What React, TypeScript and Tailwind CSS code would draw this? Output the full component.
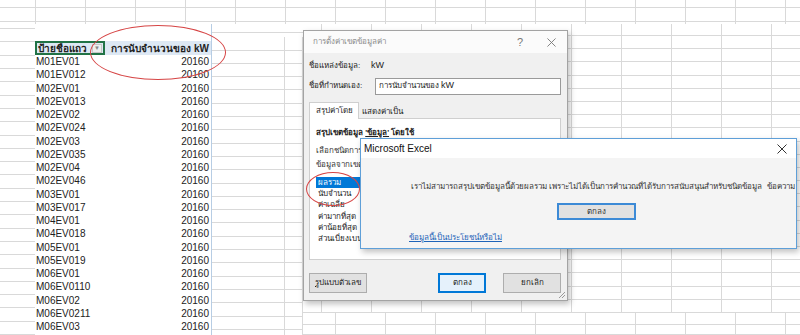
import React from 'react';

const rows = [
  'M01EV01', 'M01EV012', 'M02EV01', 'M02EV013', 'M02EV02', 'M02EV024', 'M02EV03',
  'M02EV035', 'M02EV04', 'M02EV046', 'M03EV01', 'M03EV017', 'M04EV01', 'M04EV018',
  'M05EV01', 'M05EV019', 'M06EV01', 'M06EV0110', 'M06EV02', 'M06EV0211', 'M06EV03',
];

// the list runs on under the message box; only the visible part is kept
const summaryTypes = ['ผลรวม', 'นับจำนวน', 'ค่าเฉลี่ย', 'ค่ามากที่สุด', 'ค่าน้อยที่สุด', 'ส่วนเบี่ยงเบน'];

const cells = (n: number) => Array.from({ length: n }, (_, i) => i);

const CloseIcon = ({ size = 10, color = '#555' }: { size?: number; color?: string }) => (
  <svg width={size} height={size} viewBox="0 0 10 10">
    <path d="M0.5 0.5 L9.5 9.5 M9.5 0.5 L0.5 9.5" stroke={color} strokeWidth="1" />
  </svg>
);

const ValueFieldDialog: React.FC = () => (
  <div className="absolute left-[303px] top-[30px] w-[265px] h-[271px] flex flex-col bg-[#f0f0f0] border border-[#a3a3a3] shadow-[2px_3px_6px_rgba(0,0,0,0.25)]">
    <div className="h-[22px] flex items-center bg-[#fbfbfb] pl-[9px] text-[8px] text-[#8c8c8c]">
      <span className="flex-1">การตั้งค่าเขตข้อมูลค่า</span>
      <span className="w-[30px] text-center text-[11px] text-[#777]">?</span>
      <span className="w-[32px] flex justify-center"><CloseIcon size={9} color="#777" /></span>
    </div>
    <div className="flex-1 flex flex-col px-[5px] text-[8px] text-[#222]">
      <div className="h-[16px] mt-[5px] flex items-center">
        <span className="w-[62px]">ชื่อแหล่งข้อมูล:</span>
        <span className="text-[9px]">kW</span>
      </div>
      <div className="h-[18px] mt-[3px] flex items-center">
        <span className="w-[66px]">ชื่อที่กำหนดเอง:</span>
        <div className="flex-1 h-[17px] mr-[1px] flex items-center bg-white border border-[#9a9a9a] px-[3px]">การนับจำนวนของ <span className="ml-[2px] text-[9px]">kW</span></div>
      </div>
      <div className="mt-[7px] flex items-end h-[17px]">
        <div className="h-[17px] w-[50px] flex items-center justify-center bg-white border border-b-0 border-[#cfcfcf] relative z-10">สรุปค่าโดย</div>
        <div className="h-[15px] w-[47px] flex items-center justify-center bg-[#f0f0f0]">แสดงค่าเป็น</div>
      </div>
      <div className="h-[142px] shrink-0 -mt-[1px] mr-[1px] bg-white border border-[#cfcfcf] flex flex-col px-[6px] pt-[8px] leading-[12px]">
        <div className="h-[12px] shrink-0 font-bold">สรุปเขตข้อมูล <span className="underline">'ข้อมูล'</span> โดยใช้</div>
        <div className="h-[12px] shrink-0 mt-[6px] text-[#333]">เลือกชนิดการ</div>
        <div className="h-[12px] shrink-0 mt-[2px] text-[#333]">ข้อมูลจากเขต</div>
        <div className="mt-[6px] w-[46px] shrink-0 flex flex-col">
          {summaryTypes.map((t, i) => (
            <div key={t} className={`h-[11.2px] shrink-0 leading-[11px] px-[2px] whitespace-nowrap ${i === 0 ? 'bg-[#0078d7] text-white' : ''}`}>{t}</div>
          ))}
        </div>
      </div>
      <div className="mt-[13px] flex items-center h-[20px]">
        <div className="w-[58px] h-[20px] flex items-center justify-center bg-[#e1e1e1] border border-[#adadad]"><span><span className="underline">รู</span>ปแบบตัวเลข</span></div>
        <div className="flex-1" />
        <div className="w-[48px] h-[20px] flex items-center justify-center bg-[#e5f1fb] border-2 border-[#0078d7]">ตกลง</div>
        <div className="w-[58px] h-[20px] ml-[17px] mr-[1px] flex items-center justify-center bg-[#e1e1e1] border border-[#adadad]">ยกเลิก</div>
      </div>
    </div>
    <svg className="absolute right-[1px] bottom-[1px]" width="8" height="8" viewBox="0 0 8 8">
      <path d="M7 1 L1 7 M7 4 L4 7" stroke="#9a9a9a" strokeWidth="1" />
    </svg>
  </div>
);

const MessageBox: React.FC = () => (
  <div className="absolute left-[360px] top-[138px] w-[437px] h-[111px] flex flex-col bg-[#f4f4f4] border border-[#5e9fd8] shadow-[2px_3px_6px_rgba(0,0,0,0.25)]">
    <div className="h-[19px] flex items-center bg-white pl-[3px] text-[10px] text-[#111]">
      <span className="flex-1">Microsoft Excel</span>
      <span className="w-[28px] flex justify-center"><CloseIcon size={10} color="#333" /></span>
    </div>
    <div className="flex-1 flex flex-col items-center text-[8px] text-[#333]">
      <div className="mt-[23px] pl-[50px] w-full whitespace-nowrap">เราไม่สามารถสรุปเขตข้อมูลนี้ด้วยผลรวม เพราะไม่ได้เป็นการคำนวณที่ได้รับการสนับสนุนสำหรับชนิดข้อมูล&nbsp;&nbsp;ข้อความ</div>
      <div className="mt-[10px] w-[79px] h-[17px] ml-[36px] flex items-center justify-center bg-[#e1e1e1] border-2 border-[#3c8ad6]">ตกลง</div>
      <div className="mt-[12px] pl-[48px] w-full text-[#1e63b8] underline">ข้อมูลนี้เป็นประโยชน์หรือไม่</div>
    </div>
  </div>
);

const App: React.FC = () => {
  return (
    <div className="relative w-[800px] h-[335px] overflow-hidden bg-white font-['Liberation_Sans','DejaVu_Sans','Noto_Sans',sans-serif]">
      {/* top strip of sheet */}
      <div className="h-[24px] flex">
        <div className="w-[36px] shrink-0 border-r border-[#d9d9d9] flex flex-col">
          <div className="h-[8px] border-b border-[#d9d9d9]" />
          <div className="h-[14px] border-b border-[#d9d9d9]" />
        </div>
        {cells(16).map(i => (
          <div key={i} className="w-[50px] shrink-0 border-r border-[#d9d9d9] flex flex-col">
            <div className="h-[8px] border-b border-[#d9d9d9]" />
            <div className="h-[14px] border-b border-[#d9d9d9]" />
          </div>
        ))}
      </div>

      <div className="h-[311px] flex">
        {/* left gutter */}
        <div className="w-[35px] shrink-0 flex flex-col">
          <div className="h-[8px] border-b border-[#d9d9d9]" />
          {cells(23).map(i => <div key={i} className="h-[13.3px] shrink-0 border-b border-[#d9d9d9]" />)}
        </div>

        {/* pivot table */}
        <div className="w-[177px] shrink-0 flex flex-col border-r border-[#b7cde4] text-[10px] text-[#222]">
          <div className="h-[17px]" />
          <div className="h-[14px] flex bg-[#dde8f4] font-bold">
            <div className="w-[70px] relative flex items-center pl-[1px] border-2 border-[#217346] overflow-hidden whitespace-nowrap">
              ป้ายชื่อแถว
              <div className="absolute right-[1px] top-[1px] w-[10px] h-[9px] bg-[#eeeeee] border border-[#c6c6c6] flex items-center justify-center text-[6px] text-[#888] font-normal">▼</div>
            </div>
            <div className="flex-1 flex items-center justify-end pr-[2px] whitespace-nowrap">การนับจำนวนของ kW</div>
          </div>
          {rows.map(r => (
            <div key={r} className="h-[13.25px] shrink-0 flex items-center justify-between pl-[1px] pr-[2px]">
              <span>{r}</span>
              <span>20160</span>
            </div>
          ))}
        </div>

        {/* middle gap grid */}
        <div className="w-[91px] shrink-0 grid grid-cols-[73px_18px] auto-rows-[13.3px] content-start">
          <div className="col-span-2 h-[9px] border-b border-[#d9d9d9]" />
          {cells(46).map(i => <div key={i} className="border-b border-r border-[#d9d9d9]" />)}
        </div>

        {/* right sheet area */}
        <div className="flex-1 min-w-0 flex flex-col overflow-hidden">
          <div className="h-[289px] grid grid-cols-[19px_repeat(10,50px)] grid-rows-[12px_repeat(21,13.2px)] overflow-hidden">
            {cells(22 * 11).map(i => <div key={i} className="border-b border-r border-[#d9d9d9]" />)}
          </div>
          <div className="h-[22px] grid grid-cols-[33px_repeat(10,50px)] grid-rows-[12px_10px] overflow-hidden">
            {cells(22).map(i => <div key={i} className="border-b border-r border-[#d9d9d9]" />)}
          </div>
        </div>
      </div>

      <ValueFieldDialog />
      <MessageBox />

      {/* red ellipses */}
      <div className="absolute left-[90px] top-[25px] w-[136px] h-[55px] rounded-[50%] border border-[#d64545]" />
      <div className="absolute left-[306px] top-[172px] w-[54px] h-[34px] rounded-[50%] border border-[#d64545]" />
    </div>
  );
};

export default App;
